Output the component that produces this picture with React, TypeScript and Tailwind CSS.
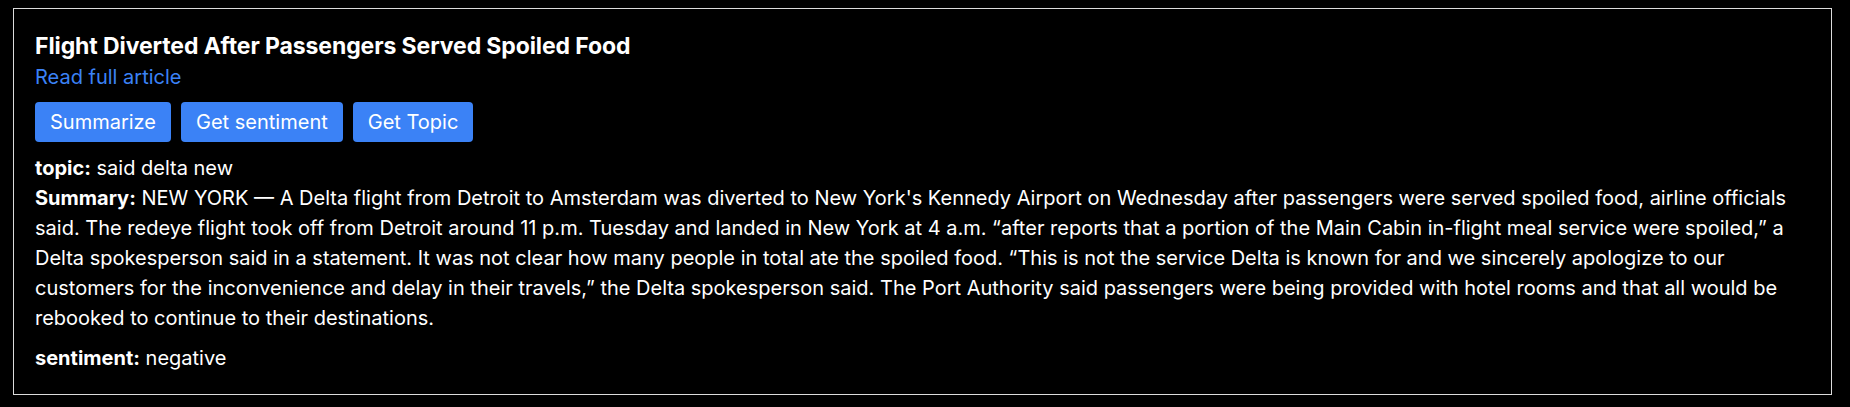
import { useState } from "react";

const article = {
  title: "Flight Diverted After Passengers Served Spoiled Food",
  topic: "said delta new",
  summary:
    "NEW YORK — A Delta flight from Detroit to Amsterdam was diverted to New York's Kennedy Airport on Wednesday after passengers were served spoiled food, airline officials said. The redeye flight took off from Detroit around 11 p.m. Tuesday and landed in New York at 4 a.m. “after reports that a portion of the Main Cabin in-flight meal service were spoiled,” a Delta spokesperson said in a statement. It was not clear how many people in total ate the spoiled food. “This is not the service Delta is known for and we sincerely apologize to our customers for the inconvenience and delay in their travels,” the Delta spokesperson said. The Port Authority said passengers were being provided with hotel rooms and that all would be rebooked to continue to their destinations.",
  sentiment: "negative",
};

const App = () => {
  const [show] = useState(true);
  return (
    <div className="min-h-screen bg-black pt-2 pl-[13px] font-['Inter',sans-serif] text-white">
      <div className="w-[1819px] h-[387px] border border-[#dcdcdc] p-[21px]">
        <p className="text-[23px] font-bold leading-[32px] tracking-[-0.1px]">{article.title}</p>
        <a href="#" className="block text-[20px] leading-[30px] text-[#3b82f6]">Read full article</a>
        {/* BUTTONS */}
        <div className="flex gap-[10px] mt-[10px]">
          <button className="h-10 px-[15px] rounded bg-[#3b82f6] text-[20px]">Summarize</button>
          <button className="h-10 px-[15px] rounded bg-[#3b82f6] text-[20px]">Get sentiment</button>
          <button className="h-10 px-[15px] rounded bg-[#3b82f6] text-[20px]">Get Topic</button>
        </div>
        {show && (
          <div className="mt-[11px] text-[20px] leading-[30px]">
            <p><span className="font-bold">topic:</span> {article.topic}</p>
            <p><span className="font-bold">Summary:</span> {article.summary}</p>
            <p className="mt-[10px]"><span className="font-bold">sentiment:</span> {article.sentiment}</p>
          </div>
        )}
      </div>
    </div>
  );
};

export default App;
